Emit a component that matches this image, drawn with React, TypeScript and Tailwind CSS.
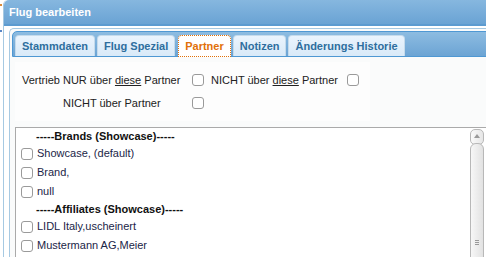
import React from "react";

const Box = ({ className = "" }: { className?: string }) => (
  <span
    className={
      "inline-block w-[12px] h-[12px] shrink-0 rounded-[3px] border border-[#9a9a9a] bg-white " +
      className
    }
  />
);

const tabs = ["Stammdaten", "Flug Spezial", "Partner", "Notizen", "Änderungs Historie"];

type Row = { head?: boolean; text: string };

const rows: Row[] = [
  { head: true, text: "-----Brands (Showcase)-----" },
  { text: "Showcase, (default)" },
  { text: "Brand," },
  { text: "null" },
  { head: true, text: "-----Affiliates (Showcase)-----" },
  { text: "LIDL Italy,uscheinert" },
  { text: "Mustermann AG,Meier" },
];

export default function App() {
  return (
    <div className="w-[486px] h-[257px] overflow-hidden flex bg-white font-['Liberation_Sans',Arial,sans-serif] text-[11px] text-[#222]">
      {/* page behind dialog */}
      <div className="w-[3px] shrink-0 flex flex-col bg-white">
        <span className="mt-[4px] h-[2px] w-[2px] bg-[#d98b3a]" />
        <span className="mt-[24px] h-[2px] w-[2px] bg-[#5a86c4]" />
      </div>

      {/* dialog */}
      <div className="w-[560px] shrink-0 flex flex-col border-l border-[#a6c9e2] rounded-tl-[5px]">
        <div className="h-[26px] shrink-0 flex items-center pl-[5px] rounded-tl-[5px] border-b-2 border-[#5c9bd0] bg-[linear-gradient(to_bottom,#86b7df,#6aa3d4)] text-white font-bold text-[11px]">
          Flug bearbeiten
        </div>

        <div className="flex-1 min-h-0 pt-[2px] pl-[5px] bg-white">
          <div className="h-full border-l border-t border-[#a6c9e2] rounded-tl-[5px] pt-[2px] pl-[2px] bg-[#fafbfb]">
            {/* tab strip */}
            <div className="h-[26px] flex items-end gap-[2px] pl-[2px] rounded-tl-[5px] border border-[#4f98d3] bg-[linear-gradient(to_bottom,#8dbce1,#6ca4d4)]">
              {tabs.map((t) =>
                t === "Partner" ? (
                  <div
                    key={t}
                    className="h-[22px] mb-[-1px] ml-[1px] flex items-center px-[6px] rounded-t-[4px] bg-white border border-dotted border-[#e17009] text-[#e17009] font-bold text-[11px]"
                  >
                    {t}
                  </div>
                ) : (
                  <div
                    key={t}
                    className="h-[21px] flex items-center px-[6px] rounded-t-[4px] border border-b-0 border-[#c5dbec] bg-[linear-gradient(to_bottom,#eaf4fd,#d9eaf8)] text-[#2e6e9e] font-bold text-[11px]"
                  >
                    {t}
                  </div>
                )
              )}
            </div>

            {/* panel content */}
            <div className="pl-[3px] pt-[5px]">
              <div className="w-[355px] py-[10px] bg-[#fdfdfd] flex flex-col gap-[7px]">
                <div className="h-[16px] flex items-center">
                  <span className="w-[177px] pl-[7px]">
                    Vertrieb NUR über <u>diese</u> Partner
                  </span>
                  <Box />
                  <span className="ml-[7px]">
                    NICHT über <u>diese</u> Partner
                  </span>
                  <Box className="ml-[9px]" />
                </div>
                <div className="h-[16px] flex items-center">
                  <span className="w-[177px] pl-[48px]">NICHT über Partner</span>
                  <Box />
                </div>
              </div>

              <div className="mt-[6px] w-[480px] h-[140px] flex border border-[#aaaaaa] bg-white">
                <div className="flex-1 flex flex-col">
                  {rows.map((r) =>
                    r.head ? (
                      <div key={r.text} className="h-[16px] flex items-center pl-[20px] font-bold text-[#111]">
                        {r.text}
                      </div>
                    ) : (
                      <div key={r.text} className="h-[19px] flex items-center pl-[5px] text-[#1b2547]">
                        <Box />
                        <span className="ml-[4px]">{r.text}</span>
                      </div>
                    )
                  )}
                </div>
                {/* scrollbar */}
                <div className="w-[14px] mr-[10px] pt-[1px] flex flex-col">
                  <div className="h-[16px] flex items-start justify-center pt-[4px] rounded-[5px] border border-[#b8b8b8] bg-[linear-gradient(to_right,#fafafa,#e6e6e6)]">
                    <svg width="6" height="4" viewBox="0 0 6 4">
                      <path d="M0 4 L3 0 L6 4 Z" fill="#9a9a9a" />
                    </svg>
                  </div>
                  <div className="mt-[-2px] flex-1 flex flex-col items-center justify-end pb-[20px] rounded-t-[6px] border border-[#b8b8b8] bg-[linear-gradient(to_right,#f7f7f7,#e2e2e2)]">
                    <span className="w-[4px] h-[1px] bg-[#999]" />
                    <span className="mt-[1px] w-[4px] h-[1px] bg-[#999]" />
                    <span className="mt-[1px] w-[4px] h-[1px] bg-[#999]" />
                  </div>
                </div>
              </div>
            </div>
          </div>
        </div>
      </div>
    </div>
  );
}
